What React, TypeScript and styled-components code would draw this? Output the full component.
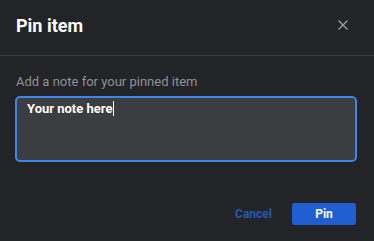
import React from "react";
import styled, { createGlobalStyle } from "styled-components";

const Global = createGlobalStyle`
  html, body { margin: 0; padding: 0; background: #232427; }
  body { font-family: Roboto, "Liberation Sans", Arial, sans-serif; }
  * { box-sizing: border-box; }
`;

const Dialog = styled.div`
  width: 374px;
  height: 241px;
  background: #232427;
  display: flex;
  flex-direction: column;
`;

const Header = styled.div`
  height: 56px;
  display: flex;
  align-items: center;
  justify-content: space-between;
  padding: 0 24px 0 16px;
  border-bottom: 1px solid #3a3b3e;
`;

const Title = styled.h1`
  margin: 0;
  font-size: 18px;
  font-weight: 700;
  color: #ffffff;
  line-height: 1;
  padding-bottom: 3px;
`;

const CloseButton = styled.button`
  background: none;
  border: none;
  padding: 0;
  width: 14px;
  height: 14px;
  display: flex;
  align-items: center;
  justify-content: center;
  color: #9aa0a6;
  cursor: pointer;
  margin-top: -6px;
`;

const Body = styled.div`
  padding: 18px 17px 0 15px;
  display: flex;
  flex-direction: column;
  gap: 6px;
`;

const Label = styled.label`
  font-size: 13px;
  color: #8f9195;
  padding-left: 1px;
  line-height: 16px;
`;

const NoteBox = styled.div`
  height: 66px;
  border: 2px solid #3b86e8;
  border-radius: 5px;
  background: #3c3d40;
  padding: 3px 10px;
  font-size: 13px;
  font-weight: 700;
  color: #ffffff;
  line-height: 16px;
  display: flex;
  align-items: flex-start;
`;

const Caret = styled.span`
  display: inline-block;
  width: 1px;
  height: 15px;
  background: #ffffff;
  margin-left: 1px;
`;

const Footer = styled.div`
  margin-top: auto;
  display: flex;
  justify-content: flex-end;
  align-items: center;
  gap: 20px;
  padding: 0 18px 16px 0;
`;

const TextButton = styled.button`
  background: none;
  border: none;
  padding: 0;
  font-family: inherit;
  font-size: 12px;
  font-weight: 700;
  color: #2458b3;
  cursor: pointer;
`;

const PrimaryButton = styled.button`
  width: 64px;
  height: 22px;
  background: #1f5fd1;
  border: none;
  border-radius: 3px;
  font-family: inherit;
  font-size: 12px;
  font-weight: 700;
  color: #ffffff;
  cursor: pointer;
`;

export default function App() {
  return (
    <>
      <Global />
      <Dialog>
        <Header>
          <Title>Pin item</Title>
          <CloseButton aria-label="Close">
            <svg width="10" height="10" viewBox="0 0 10 10">
              <path d="M0.5 0.5L9.5 9.5M9.5 0.5L0.5 9.5" stroke="currentColor" strokeWidth="1.3" />
            </svg>
          </CloseButton>
        </Header>
        <Body>
          <Label>Add a note for your pinned item</Label>
          <NoteBox>
            Your note here<Caret />
          </NoteBox>
        </Body>
        <Footer>
          <TextButton>Cancel</TextButton>
          <PrimaryButton>Pin</PrimaryButton>
        </Footer>
      </Dialog>
    </>
  );
}
